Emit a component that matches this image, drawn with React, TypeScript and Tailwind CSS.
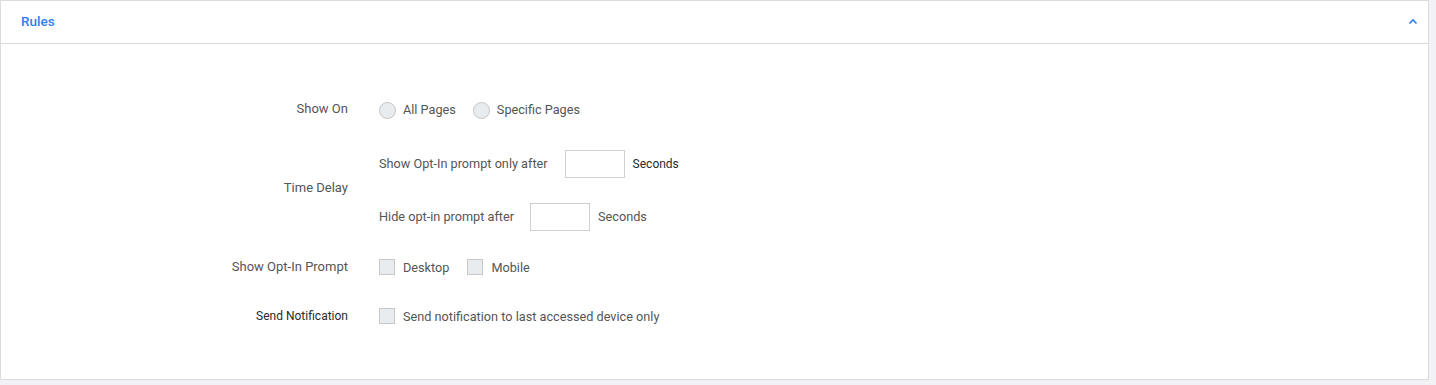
import { ReactNode } from 'react';

const font = { fontFamily: 'Roboto, "Liberation Sans", sans-serif' };

function Radio({ label }: { label: string }) {
  return (
    <label className="flex items-center">
      <span className="mt-[3px] h-[17px] w-[17px] rounded-full border border-[#c4c4c4] bg-[#e9ecef]" />
      <span className="ml-[7px] mt-[2px] text-[12.7px] text-[#555]">{label}</span>
    </label>
  );
}

function Check({ label }: { label: string }) {
  return (
    <label className="flex items-center">
      <span className="h-[16px] w-[16px] border border-[#c8c8c8] bg-[#e9ecef]" />
      <span className="ml-[8px] mt-[1px] text-[12.7px] text-[#555]">{label}</span>
    </label>
  );
}

function Row({ label, strong, children }: { label: string; strong?: boolean; children: ReactNode }) {
  return (
    <div className="flex h-[28px] items-center">
      <div
        className={`w-[348px] pr-[1px] text-right ${strong ? 'text-[12px] text-[#2a2a2a]' : 'text-[13px] text-[#555]'}`}
      >
        {label}
      </div>
      <div className="ml-[30px] flex items-center">{children}</div>
    </div>
  );
}

function SecondsInput({ strong }: { strong?: boolean }) {
  return (
    <>
      <span className="h-[28px] w-[60px] border border-[#d0d0d0] bg-white" />
      <span
        className={`ml-[8px] ${strong ? 'text-[12px] text-[#2a2a2a]' : 'text-[12.7px] text-[#555]'}`}
      >
        Seconds
      </span>
    </>
  );
}

export default function App() {
  return (
    <div className="h-[385px] w-[1436px] bg-[#f1f1f6]" style={font}>
      <div className="w-[1429px] border border-[#dcdcdc] bg-white">
        <div className="flex h-[43px] items-center justify-between border-b border-[#d9d9d9] pl-[20px] pr-[10px]">
          <span className="mt-[-1px] text-[13.5px] font-medium text-[#2d7ff0]">Rules</span>
          <svg width="10" height="7" viewBox="0 0 10 7" fill="none" className="mt-[-1px]">
            <path d="M1.5 5.5 5 2l3.5 3.5" stroke="#2d7ff0" strokeWidth="1.6" />
          </svg>
        </div>

        <div className="flex flex-col pb-[49px] pt-[51px]">
          <Row label="Show On">
            <Radio label="All Pages" />
            <span className="ml-[17px]" />
            <Radio label="Specific Pages" />
          </Row>

          <div className="mt-[27px] flex">
            <div className="flex w-[348px] items-center justify-end pb-[6px] pr-[1px] text-[13px] text-[#555]">
              Time Delay
            </div>
            <div className="ml-[30px] flex flex-col gap-[25px]">
              <div className="flex h-[28px] items-center">
                <span className="mr-[17px] text-[12.7px] text-[#555]">Show Opt-In prompt only after</span>
                <SecondsInput strong />
              </div>
              <div className="flex h-[28px] items-center">
                <span className="mr-[16px] text-[12.7px] text-[#555]">Hide opt-in prompt after</span>
                <SecondsInput />
              </div>
            </div>
          </div>

          <div className="mt-[22px]">
            <Row label="Show Opt-In Prompt">
              <Check label="Desktop" />
              <span className="ml-[18px]" />
              <Check label="Mobile" />
            </Row>
          </div>

          <div className="mt-[21px]">
            <Row label="Send Notification" strong>
              <Check label="Send notification to last accessed device only" />
            </Row>
          </div>
        </div>
      </div>
    </div>
  );
}
